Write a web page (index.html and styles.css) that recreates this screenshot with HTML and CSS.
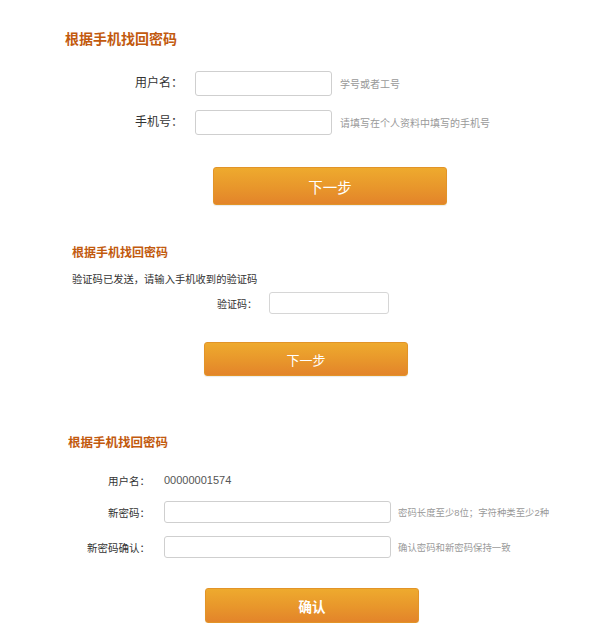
FILE: index.html
```html
<!DOCTYPE html>
<html lang="zh-CN">
<head>
<meta charset="utf-8">
<title>根据手机找回密码</title>
<link rel="stylesheet" href="styles.css">
</head>
<body>
<div class="page">
  <section class="s1">
    <h2 class="title t1">根据手机找回密码</h2>
    <div class="row r1">
      <label class="lab">用户名：</label>
      <input class="inp" type="text">
      <span class="hint">学号或者工号</span>
    </div>
    <div class="row r2">
      <label class="lab">手机号：</label>
      <input class="inp" type="text">
      <span class="hint">请填写在个人资料中填写的手机号</span>
    </div>
    <button class="btn b1" type="button">下一步</button>
  </section>

  <section class="s2">
    <h2 class="title t2">根据手机找回密码</h2>
    <p class="note">验证码已发送，请输入手机收到的验证码</p>
    <div class="row">
      <label class="lab">验证码：</label>
      <input class="inp" type="text">
    </div>
    <button class="btn b2" type="button">下一步</button>
  </section>

  <section class="s3">
    <h2 class="title t3">根据手机找回密码</h2>
    <div class="row ru">
      <label class="lab">用户名：</label>
      <span class="val">00000001574</span>
    </div>
    <div class="row rp">
      <label class="lab">新密码：</label>
      <input class="inp" type="password">
      <span class="hint">密码长度至少8位；字符种类至少2种</span>
    </div>
    <div class="row rc">
      <label class="lab">新密码确认：</label>
      <input class="inp" type="password">
      <span class="hint">确认密码和新密码保持一致</span>
    </div>
    <button class="btn b3" type="button">确认</button>
  </section>
</div>
</body>
</html>
```
FILE: styles.css
```css
* { box-sizing: border-box; }
html, body { margin: 0; padding: 0; background: #fff; }
body {
  font-family: "Liberation Sans", "Noto Sans CJK SC", sans-serif;
  color: #333;
}
.page { width: 600px; }
section { display: flex; flex-direction: column; align-items: flex-start; }

.title {
  margin: 0;
  font-weight: bold;
  color: #c25a0e;
  white-space: nowrap;
}
.row { display: flex; align-items: center; }
.lab { text-align: right; flex: none; white-space: nowrap; color: #333; }
.inp {
  margin: 0;
  padding: 0 4px;
  background: #fff;
  border: 1px solid #cfcfcf;
  border-radius: 3px;
  outline: none;
  flex: none;
}
.hint { color: #999; white-space: nowrap; }
.btn {
  margin: 0;
  padding: 0;
  color: #fff;
  border: 1px solid #e29428;
  border-radius: 3px;
  background: linear-gradient(to bottom, #eeaa2e 0%, #e8962b 55%, #e3842a 100%);
  font-family: "Liberation Sans", "Noto Sans CJK SC", sans-serif;
  cursor: pointer;
  box-shadow: 0 1px 1px rgba(0,0,0,0.08);
}

/* section 1 */
.s1 { padding-left: 65px; }
.t1 { margin-top: 29px; font-size: 14px; line-height: 20px; }
.s1 .row { height: 25px; }
.s1 .lab { width: 118px; margin-right: 12px; font-size: 12px; line-height: 25px; }
.s1 .inp { width: 137px; height: 25px; }
.s1 .hint { margin-left: 8px; font-size: 10px; }
.r1 { margin-top: 22px; }
.r2 { margin-top: 14px; }
.b1 { margin-top: 32px; margin-left: 148px; width: 234px; height: 38px; font-size: 14.5px; }

/* section 2 */
.s2 { padding-left: 72px; }
.t2 { margin-top: 39px; font-size: 12px; line-height: 18px; }
.note { margin: 10px 0 0; font-size: 10.3px; line-height: 16px; color: #333; white-space: nowrap; }
.s2 .row { margin-top: 4px; height: 22px; }
.s2 .lab { width: 185px; margin-right: 12px; font-size: 10px; }
.s2 .inp { width: 120px; height: 22px; border-color: #d6d6d6; }
.b2 { margin-top: 28px; margin-left: 132px; width: 204px; height: 34px; font-size: 13px; }

/* section 3 */
.s3 { padding-left: 68px; }
.t3 { margin-top: 58px; font-size: 12.5px; line-height: 18px; }
.s3 .row { height: 22px; }
.s3 .lab { width: 82px; margin-right: 14px; font-size: 10.5px; }
.val { font-size: 11px; color: #555; }
.s3 .inp { width: 227px; height: 22px; }
.s3 .hint { margin-left: 7px; font-size: 9.4px; }
.ru { margin-top: 17px; }
.rp { margin-top: 10px; }
.rc { margin-top: 13px; }
.b3 { margin-top: 30px; margin-left: 137px; width: 214px; height: 35px; font-size: 13.5px; font-weight: bold; }
```
